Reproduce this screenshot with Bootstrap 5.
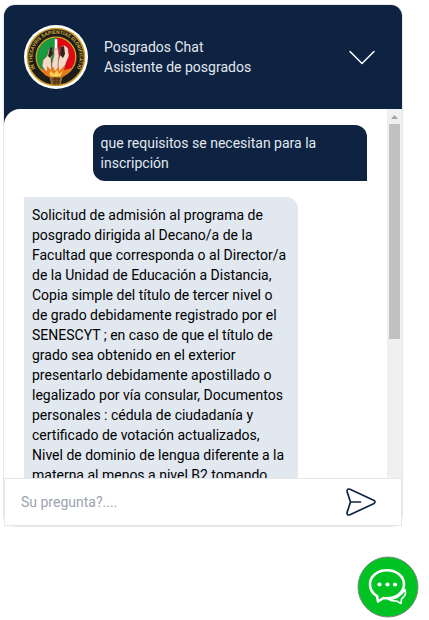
<!DOCTYPE html>
<html lang="es">
<head>
<meta charset="utf-8">
<meta name="viewport" content="width=device-width, initial-scale=1">
<title>Posgrados Chat</title>
<link href="https://cdn.jsdelivr.net/npm/bootstrap@5.3.0/dist/css/bootstrap.min.css" rel="stylesheet">
<style>
  :root { --navy: #0d2341; --line: #e5e7eb; --mist: #e2e8f0; }
  body { font-family: Roboto, "Liberation Sans", sans-serif; font-size: 14px; line-height: 20px; color: #000; }
  .page { padding: 4px 26px 2px 3px; }
  .chat { border: 1px solid var(--line); border-radius: 12px; min-height: 0; }
  .chat-top { background: var(--navy); color: var(--mist); padding: 20px 24px 20px 20px; border-radius: 11px 11px 0 0; }
  .chat-back { background: var(--navy); min-height: 0; }
  .chat-body { border-top-left-radius: 16px; min-height: 0; }
  .messages { padding: 16px 20px 0; gap: 16px; min-height: 0; }
  .bubble { width: 80%; padding: 8px; flex-shrink: 0; }
  .bubble-user { background: var(--navy); color: var(--mist); border-radius: 12px 12px 0 12px; }
  .bubble-bot { background: #e1e8f0; border-radius: 0 12px 12px 12px; }
  .scroll-track { width: 15px; background: #f0f0f0; padding: 0 2px; }
  .scroll-arrow { height: 15px; }
  .scroll-thumb { height: 61%; max-height: 215px; background: #c1c1c1; }
  .ask { border: 1px solid var(--line); height: 48px; padding: 0 24px 0 16px; }
  .ask input { font-size: 14px; line-height: 20px; min-width: 0; }
  .ask input::placeholder { color: #9ca3af; opacity: 1; }
  .launcher { margin: 29px -16px 0 0; }
  .plain { line-height: 0; }
  .seal-text { font: bold 5px Roboto, "Liberation Sans", sans-serif; fill: #c9a53a; }
</style>
<script src="https://cdn.jsdelivr.net/npm/bootstrap@5.3.0/dist/js/bootstrap.bundle.min.js"></script>
</head>
<body class="bg-white">
<div class="page vh-100 d-flex flex-column">
  <main class="chat flex-grow-1 d-flex flex-column">
    <header class="chat-top flex-shrink-0 d-flex align-items-center gap-3">
      <svg class="flex-shrink-0" width="64" height="64" viewBox="0 0 64 64" role="img" aria-label="Escudo de la universidad">
        <circle cx="32" cy="32" r="32" fill="#fff"/>
        <circle cx="32" cy="32" r="28.5" fill="#1d1c1a" stroke="#c99b25" stroke-width="1.6"/>
        <path id="ring" d="M16.500 50A23.500 23.500 0 1 1 47.500 50" fill="none"/>
        <text class="seal-text"><textPath href="#ring" startOffset="50%" text-anchor="middle">IN THESAVRIS SAPIENTIAE GLORIFICATIO</textPath></text>
        <path d="M32 12.5A19.5 19.5 0 0 0 21 48L32 51Z" fill="#199a3c"/>
        <path d="M32 12.5A19.5 19.5 0 0 1 43 48L32 51Z" fill="#e30613"/>
        <circle cx="32" cy="32" r="19.8" fill="none" stroke="#d2a52b" stroke-width="1.3"/>
        <g fill="#f5d8c7" stroke="#4a3028" stroke-width=".4">
          <path d="M22 47L18 41L19 35L23 31L25 24L28 22L29 28L27 34L28 47Z"/>
          <path d="M39 47L42 38L45 31L44 23L40 20L37 22L36 30L34 37L34 47Z"/>
          <path d="M27 50L28 38L30 30L30 22L34 22L35 31L34 39L35 50Z"/>
        </g>
        <path d="M26 23L28 22L29 29L26 33L24 31ZM37 22L40 21L41 29L39 33L36 30Z" fill="#30221d"/>
        <path d="M30.500 14H33.500V24H30.500Z" fill="#fff" stroke="#685a55" stroke-width=".5"/>
        <path d="M21 50L16 43L23 46L23 41L27 45L29 41L31 46L35 41L35 46L41 40L40 45L48 43L42 50L37 53H27Z" fill="#e5791c"/>
        <path d="M25 49L27 46L30 49L33 45L35 49L39 46L36 52H28Z" fill="#ffd052"/>
        <path d="M26 52H38L36 60H28Z" fill="#7d5521" stroke="#bf8b2d" stroke-width=".8"/>
        <path d="M28 54H36M29 57H36M31 52V60M34 52V60" stroke="#3d2a16" stroke-width=".8"/>
      </svg>
      <div class="flex-grow-1">
        <div>Posgrados Chat</div>
        <div>Asistente de posgrados</div>
      </div>
      <button class="plain btn p-0 border-0 text-white" type="button" aria-label="Minimizar chat">
        <svg width="32" height="32" viewBox="0 0 32 32" fill="none" stroke="currentColor" stroke-width="1.5" stroke-linecap="round" stroke-linejoin="round"><path d="M4 10.5L16 22.5L28 10.5"/></svg>
      </button>
    </header>
    <div class="chat-back flex-grow-1 d-flex">
      <section class="chat-body bg-white flex-grow-1 d-flex overflow-hidden">
        <div class="messages flex-grow-1 d-flex flex-column overflow-hidden">
          <div class="bubble bubble-user align-self-end">que requisitos se necesitan para la inscripción</div>
          <div class="bubble bubble-bot">Solicitud de admisión al programa de posgrado dirigida al Decano/a de la Facultad que corresponda o al Director/a de la Unidad de Educación a Distancia, Copia simple del título de tercer nivel o de grado debidamente registrado por el SENESCYT ; en caso de que el título de grado sea obtenido en el exterior presentarlo debidamente apostillado o legalizado por vía consular, Documentos personales : cédula de ciudadanía y certificado de votación actualizados, Nivel de dominio de lengua diferente a la materna al menos a nivel B2 tomando</div>
        </div>
        <div class="scroll-track flex-shrink-0" aria-hidden="true">
          <svg class="scroll-arrow d-block" width="11" height="15" viewBox="0 0 11 15"><path d="M2 10L5.5 6L9 10Z" fill="#a3a3a3"/></svg>
          <div class="scroll-thumb"></div>
        </div>
      </section>
    </div>
    <form class="ask flex-shrink-0 bg-white d-flex align-items-center">
      <input class="flex-grow-1 border-0 p-0 bg-transparent" type="text" placeholder="Su pregunta?...." aria-label="Su pregunta">
      <button class="plain btn p-0 border-0" type="button" aria-label="Enviar">
        <svg width="32" height="32" viewBox="0 0 32 32" fill="none" stroke="#0d2341" stroke-width="1.7" stroke-linecap="round" stroke-linejoin="round"><path d="M5.5 16H15.5M5.5 16L2.2 6C1.6 3.7 3 2.4 5 3.3L28.6 14.3C30.5 15.3 30.5 16.7 28.6 17.7L5 28.7C3 29.6 1.6 28.3 2.2 26Z"/></svg>
      </button>
    </form>
  </main>
  <button class="launcher plain btn p-0 border-0 rounded-circle align-self-end flex-shrink-0" type="button" aria-label="Abrir chat">
    <svg width="62" height="62" viewBox="0 0 62 62" fill="none">
      <circle cx="31" cy="31" r="30" fill="#00c223" stroke="#7d8a7f" stroke-width="1"/>
      <path d="M30 14.2C20.500 14.200 13 20.300 13 28.200C13 33.200 15.700 37.500 20 40L21 45.500L26.500 42C27.700 42.200 28.800 42.300 30 42.300C39.500 42.300 47 36 47 28.200C47 20.300 39.500 14.200 30 14.200Z" stroke="#fff" stroke-width="2.600" stroke-linejoin="round"/>
      <path d="M48 33.500C49.500 37.500 48 40.500 44.500 43L44 47.500L39.500 45C36.500 45.300 34 44.700 31.500 43.300C37 43.300 43.500 40.500 48 33.500Z" stroke="#fff" stroke-width="1.600" stroke-linejoin="round"/>
      <g fill="#fff"><circle cx="22.500" cy="28.500" r="2.100"/><circle cx="30.500" cy="28.500" r="2.100"/><circle cx="38" cy="28.500" r="2.100"/></g>
    </svg>
  </button>
</div>
</body>
</html>
